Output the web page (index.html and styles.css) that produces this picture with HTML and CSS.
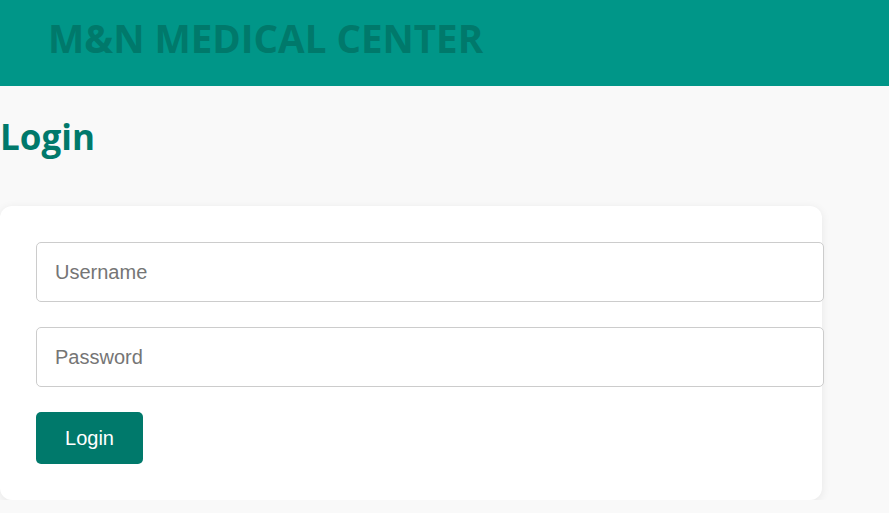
FILE: index.html
```html
<!DOCTYPE html>
<html lang="en">
<head>
	<meta charset="UTF-8">
	<title>M&amp;N Medical Center - Login</title>
	<link rel="stylesheet" href="styles.css">
</head>
<body>
	<header class="topbar">
		<h1 class="brand">M&amp;N MEDICAL CENTER</h1>
	</header>
	<main class="page">
		<h2 class="title">Login</h2>
		<form class="card" action="#">
			<input class="field" type="text" name="username" placeholder="Username">
			<input class="field" type="password" name="password" placeholder="Password">
			<button class="btn" type="submit">Login</button>
		</form>
	</main>
</body>
</html>
```
FILE: styles.css
```css
html *{
	padding:0;
	margin:0;
}
body{
	background-color:#f9f9f9;
	font-family:"Open Sans", "Liberation Sans", sans-serif;
}
.topbar{
	background-color:#009688;
	height:86px;
	display:flex;
	align-items:center;
	padding-left:48px;
}
.brand{
	color:#00796b;
	font-size:38.5px;
	font-weight:700;
	line-height:1;
	margin-top:-10px;
}
.title{
	color:#00796b;
	font-size:35px;
	font-weight:700;
	line-height:1;
	margin-top:33px;
}
.card{
	width:750px;
	padding:36px;
	margin-top:52px;
	background-color:#fff;
	border-radius:12px;
	box-shadow:0 2px 10px rgba(0,0,0,0.08);
	display:flex;
	flex-direction:column;
	align-items:flex-start;
	gap:25px;
}
.field{
	width:100%;
	height:58px;
	padding:0 18px;
	border:1px solid #ccc;
	border-radius:5px;
	font-family:"Liberation Sans", Arial, sans-serif;
	font-size:20px;
	color:#333;
	background-color:#fff;
}
.field::placeholder{
	color:#757575;
}
.btn{
	width:107px;
	height:52px;
	border:none;
	border-radius:5px;
	background-color:#00796b;
	color:#fff;
	font-family:"Liberation Sans", Arial, sans-serif;
	font-size:20px;
}
```
